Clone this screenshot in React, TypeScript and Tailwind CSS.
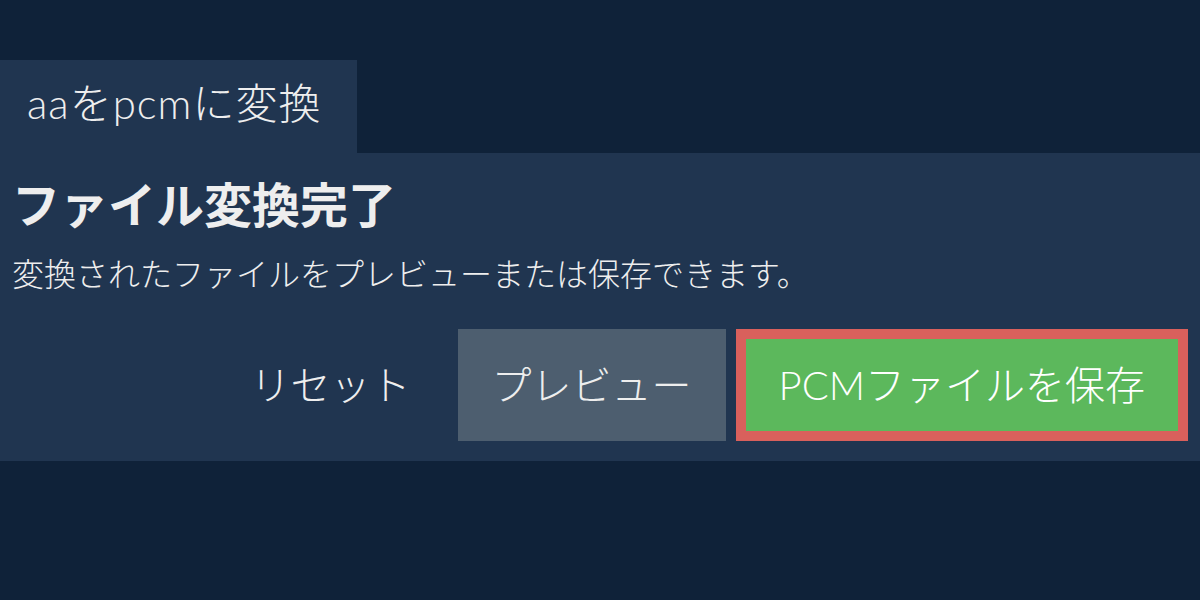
export default function App() {
  return (
    <div
      className="w-[1200px] h-[600px] bg-[#0f2239] text-[#eeeeee] pt-[60px] overflow-hidden"
      style={{ fontFamily: "Lato, 'Noto Sans CJK JP Light', 'Noto Sans CJK JP', sans-serif" }}
    >
      <div className="inline-flex h-[93px] items-center pb-[6px] px-[27px] bg-[#203550] text-[42px] tracking-[1px] font-light w-[357px]">
        aaをpcmに変換
      </div>
      <div className="bg-[#203550] pt-[23px] pb-5 px-3">
        <h1
          className="text-[48px] leading-[58px] font-bold"
          style={{ fontFamily: "Lato, 'Noto Sans CJK JP', sans-serif" }}
        >
          ファイル変換完了
        </h1>
        <p className="mt-4 text-[32px] leading-[48px] font-light">
          変換されたファイルをプレビューまたは保存できます。
        </p>
        <div className="mt-[31px] flex justify-end gap-[10px] text-[40px] font-light">
          <button className="h-[112px] px-[37px] text-[#eeeeee]">リセット</button>
          <button className="h-[112px] px-[34px] bg-[#4d5e6f] text-[#eeeeee]">プレビュー</button>
          <button className="h-[112px] px-[33px] bg-[#5cb85c] border-[10px] border-[#d9605c] text-white">
            PCMファイルを保存
          </button>
        </div>
      </div>
    </div>
  );
}
